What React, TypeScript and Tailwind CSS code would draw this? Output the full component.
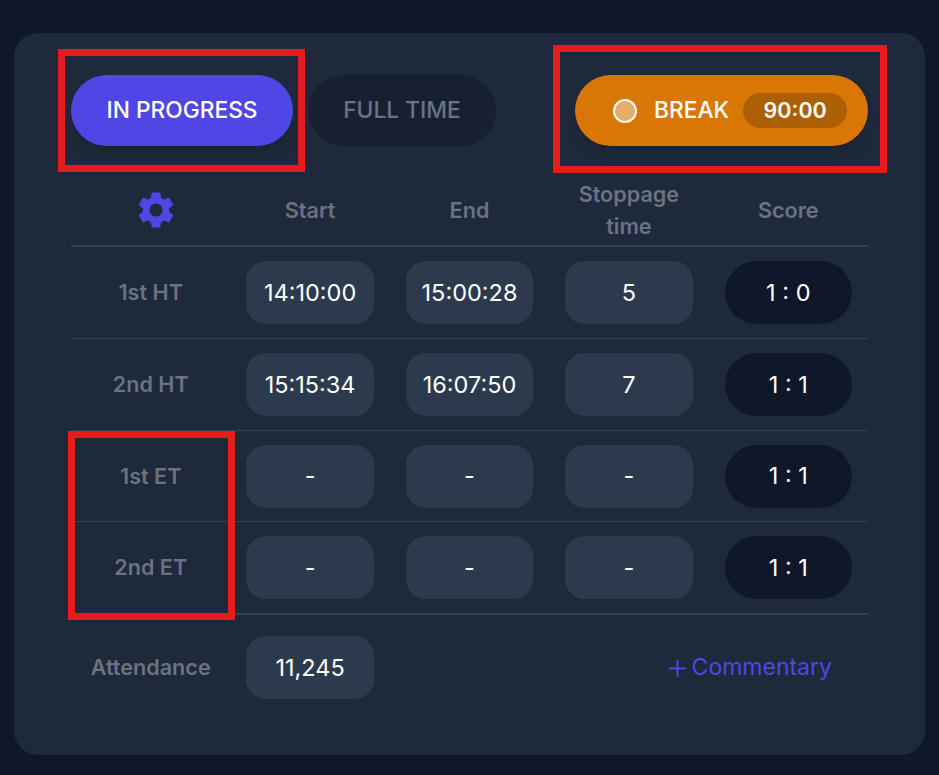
import React from 'react';

const rows = [
  { label: '1st HT', start: '14:10:00', end: '15:00:28', stoppage: '5', score: '1 : 0', cls: 'h-[92px] border-b border-[#334155]' },
  { label: '2nd HT', start: '15:15:34', end: '16:07:50', stoppage: '7', score: '1 : 1', cls: 'h-[92px] border-b border-[#334155]' },
  { label: '1st ET', start: '-', end: '-', stoppage: '-', score: '1 : 1', cls: 'h-[91px] border-b border-[#334155]' },
  { label: '2nd ET', start: '-', end: '-', stoppage: '-', score: '1 : 1', cls: 'h-[91px]' },
];

function Cell({ children }: { children: React.ReactNode }) {
  return (
    <div className="mx-4 flex h-[63px] items-center justify-center rounded-[20px] bg-[#2d3a4e] text-[23.5px] text-white">
      {children}
    </div>
  );
}

function Highlight({ className }: { className: string }) {
  return <div className={`pointer-events-none absolute border-[7px] border-[#e61c1c] ${className}`} />;
}

export default function App() {
  return (
    <div className="relative h-[775px] w-[939px] overflow-hidden bg-[#0f172a] pl-[14px] pr-[14px] pt-[33px] font-['Inter',sans-serif]">
      <div className="h-[722px] rounded-3xl bg-[#1e293b] px-[57px] pt-[42px]">
        <div className="flex items-center">
          <button className="h-[71px] w-[222px] rounded-full bg-[#4f46e5] text-[22.75px] font-medium text-white shadow-lg">
            IN PROGRESS
          </button>
          <button className="ml-[15px] h-[71px] w-[188px] rounded-full bg-[#172033] text-[22.75px] font-medium text-[#6b7280]">
            FULL TIME
          </button>
          <button className="ml-auto flex h-[71px] w-[293px] items-center rounded-full bg-[#d97706] pl-[38px] text-[22.75px] font-medium text-white shadow-lg">
            <span className="h-6 w-6 rounded-full border-2 border-white bg-white/40" />
            <span className="ml-[17px]">BREAK</span>
            <span className="ml-[14px] flex h-[35px] w-[104px] items-center justify-center rounded-full bg-[#ad6003] text-[21.5px] font-semibold">
              90:00
            </span>
          </button>
        </div>

        <div className="mt-[32px] grid h-[69px] grid-cols-5 items-center border-b-2 border-[#334155] pb-[3px] text-center text-[21.6px] font-semibold leading-8 text-[#6b7280]">
          <div className="flex justify-center pl-[10px]">
            <svg viewBox="0 0 24 24" className="h-11 w-11 fill-[#4f46e5]" aria-hidden="true">
              <path d="M19.14 12.94c.04-.3.06-.61.06-.94 0-.32-.02-.64-.07-.94l2.03-1.58a.49.49 0 0 0 .12-.61l-1.92-3.32a.49.49 0 0 0-.59-.22l-2.39.96c-.5-.38-1.03-.7-1.62-.94l-.36-2.54a.48.48 0 0 0-.48-.41h-3.84c-.24 0-.43.17-.47.41l-.36 2.54c-.59.24-1.13.57-1.62.94l-2.39-.96a.49.49 0 0 0-.59.22L2.74 8.87c-.12.21-.08.47.12.61l2.03 1.58c-.05.3-.09.63-.09.94s.02.64.07.94l-2.03 1.58a.49.49 0 0 0-.12.61l1.92 3.32c.12.22.37.29.59.22l2.39-.96c.5.38 1.03.7 1.62.94l.36 2.54c.05.24.24.41.48.41h3.84c.24 0 .44-.17.47-.41l.36-2.54c.59-.24 1.13-.56 1.62-.94l2.39.96c.22.08.47 0 .59-.22l1.92-3.32c.12-.22.07-.47-.12-.61l-2.01-1.58zM12 15.6A3.6 3.6 0 1 1 12 8.4a3.6 3.6 0 0 1 0 7.2z" />
            </svg>
          </div>
          <div>Start</div>
          <div>End</div>
          <div>
            Stoppage
            <br />
            time
          </div>
          <div>Score</div>
        </div>

        {rows.map((row) => (
          <div key={row.label} className={`grid grid-cols-5 items-center ${row.cls}`}>
            <div className="text-center text-[21.6px] font-semibold text-[#6b7280]">{row.label}</div>
            <Cell>{row.start}</Cell>
            <Cell>{row.end}</Cell>
            <Cell>{row.stoppage}</Cell>
            <div className="mx-4 flex h-[63px] items-center justify-center rounded-full bg-[#0f172a] text-[23.5px] text-white">
              {row.score}
            </div>
          </div>
        ))}

        <div className="grid grid-cols-5 items-center border-t-2 border-[#334155] pt-[21px]">
          <div className="text-center text-[21.6px] font-semibold text-[#6b7280]">Attendance</div>
          <Cell>11,245</Cell>
          <div className="col-span-3 flex items-center justify-end pr-9 text-[23px] font-normal text-[#4f46e5]">
            <svg viewBox="0 0 17 17" className="mr-[6px] mt-[1px] h-[17px] w-[17px] stroke-[#4f46e5] stroke-2" aria-hidden="true">
              <path d="M8.5 0v17M0 8.5h17" />
            </svg>
            Commentary
          </div>
        </div>
      </div>

      <Highlight className="left-[58px] top-[49px] h-[123px] w-[247px]" />
      <Highlight className="left-[553px] top-[45px] h-[128px] w-[334px]" />
      <Highlight className="left-[68px] top-[431px] h-[189px] w-[167px]" />
    </div>
  );
}
